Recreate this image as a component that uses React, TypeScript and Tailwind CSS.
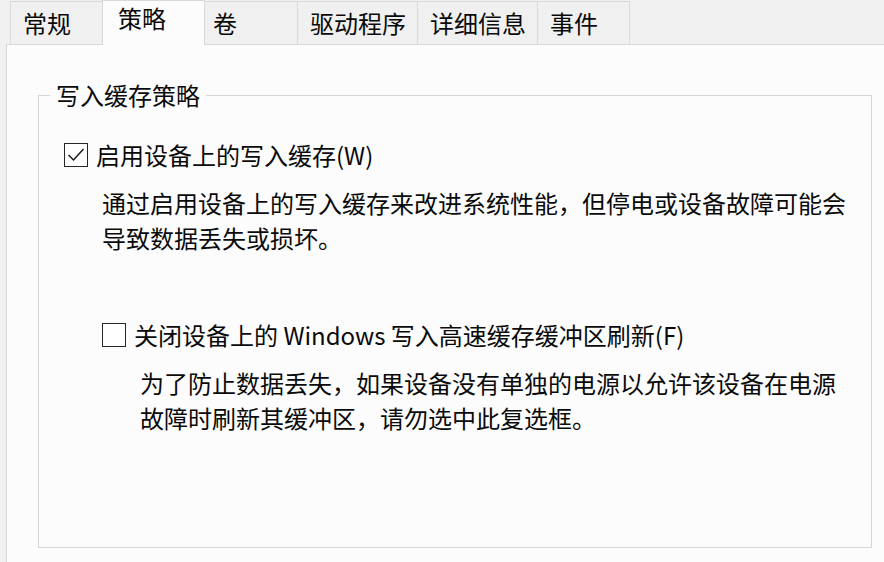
import React from "react";

const FONT = "font-['Microsoft_YaHei','Noto_Sans_CJK_SC',sans-serif]";

function Tab({ label, w, pl, selected }: { label: string; w: string; pl: string; selected?: boolean }) {
  if (selected) {
    return (
      <div
        className={`relative z-10 -ml-px h-[45px] -mb-px flex items-center pb-[10px] border-l border-r border-t border-[#d9d9d9] bg-[#fcfcfc] ${w} ${pl}`}
      >
        {label}
      </div>
    );
  }
  return (
    <div
      className={`-ml-px first:ml-0 h-[43px] flex items-center border border-b-0 border-[#d9d9d9] bg-[#f0f0f0] ${w} ${pl}`}
    >
      {label}
    </div>
  );
}

function CheckBox({ checked }: { checked?: boolean }) {
  return (
    <div className="w-[24px] h-[24px] border border-[#262626] bg-white flex items-center justify-center shrink-0">
      {checked && (
        <svg width="22" height="22" viewBox="0 0 22 22">
          <polyline points="3.5,11 8.5,16 18.5,5" fill="none" stroke="#1a1a1a" strokeWidth="1.5" />
        </svg>
      )}
    </div>
  );
}

export default function App() {
  return (
    <div className={`w-[884px] h-[562px] overflow-hidden bg-[#f0f0f0] text-[24px] text-[#0a0a0a] ${FONT}`}>
      <div className="flex items-end h-[44px] pl-[10px]">
        <Tab label="常规" w="w-[93px]" pl="pl-[12px]" />
        <Tab label="策略" w="w-[103px]" pl="pl-[15px]" selected />
        <Tab label="卷" w="w-[94px]" pl="pl-[8px]" />
        <Tab label="驱动程序" w="w-[121px]" pl="pl-[12px]" />
        <Tab label="详细信息" w="w-[121px]" pl="pl-[12px]" />
        <Tab label="事件" w="w-[93px]" pl="pl-[12px]" />
      </div>
      <div className="ml-[6px] w-[900px] h-[540px] border-l border-t border-[#d9d9d9] bg-[#fcfcfc]">
        <fieldset className="ml-[31px] mt-[36px] w-[834px] h-[467px] border border-[#d6d6d6]">
          <legend className="ml-[11px] px-[6px] leading-[28px]">写入缓存策略</legend>
          <div className="flex flex-col">
            <div className="mt-[31px] ml-[25px] flex items-center h-[30px] gap-[8px]">
              <CheckBox checked />
              <span className="leading-[30px]">启用设备上的写入缓存(W)</span>
            </div>
            <div className="mt-[15px] ml-[63px] leading-[35px]">
              <div>通过启用设备上的写入缓存来改进系统性能，但停电或设备故障可能会</div>
              <div>导致数据丢失或损坏。</div>
            </div>
            <div className="mt-[65px] ml-[63px] flex items-center h-[30px] gap-[8px]">
              <CheckBox />
              <span className="leading-[30px]">关闭设备上的 Windows 写入高速缓存缓冲区刷新(F)</span>
            </div>
            <div className="mt-[15px] ml-[101px] leading-[35px]">
              <div>为了防止数据丢失，如果设备没有单独的电源以允许该设备在电源</div>
              <div>故障时刷新其缓冲区，请勿选中此复选框。</div>
            </div>
          </div>
        </fieldset>
      </div>
    </div>
  );
}
